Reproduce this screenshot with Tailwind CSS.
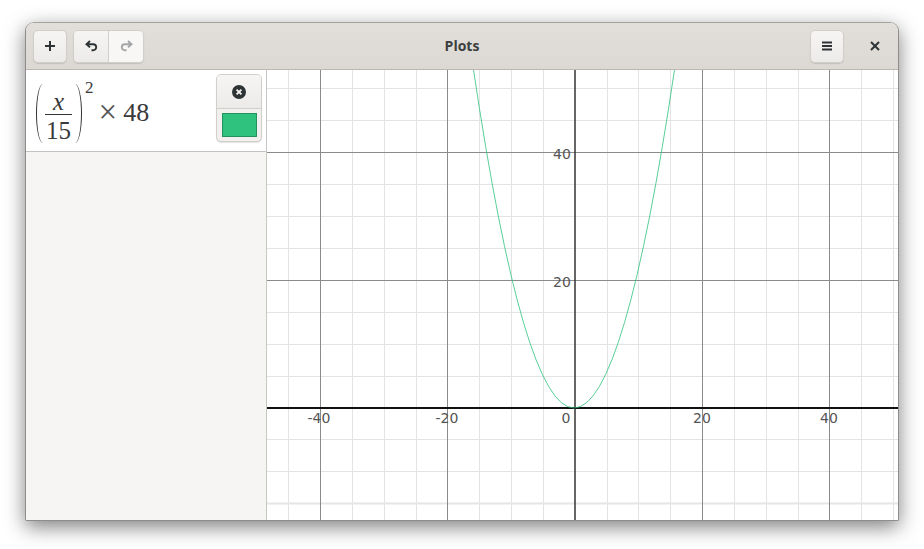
<!DOCTYPE html>
<html lang="en">
<head>
  <meta charset="UTF-8" />
  <title>Plots</title>
  <script src="https://cdn.jsdelivr.net/npm/@tailwindcss/browser@4"></script>
</head>
<body class="w-[924px] h-[549px] bg-white overflow-hidden font-['Open_Sans',sans-serif]">
  <div class="pt-[22px] pl-[25px]">
    <div class="w-[874px] h-[499px] flex flex-col rounded-t-[9px] rounded-b-[2px] border border-[#8f8d8a] border-t-[#a5a39f] shadow-[0_6px_20px_rgba(0,0,0,0.5)] overflow-hidden bg-white">
      <!-- header bar -->
      <header class="h-[47px] shrink-0 flex items-center pl-[7px] pr-[6px] bg-gradient-to-b from-[#e2dfdb] to-[#dcd9d4] border-b border-[#bfb8b1]">
        <button class="shrink-0 w-[34px] h-[33px] flex items-center justify-center rounded-[5px] border border-[#d2cfca] bg-gradient-to-b from-[#f6f5f4] to-[#edebe9] shadow-[0_1px_1px_rgba(0,0,0,0.12)]">
          <svg width="12" height="12" viewBox="0 0 12 12"><path d="M5 1h2v4h4v2H7v4H5V7H1V5h4z" fill="#2e3436"/></svg>
        </button>
        <div class="shrink-0 ml-[6px] flex w-[71px] h-[33px] rounded-[5px] border border-[#d2cfca] shadow-[0_1px_1px_rgba(0,0,0,0.12)] overflow-hidden">
          <button class="w-[35px] flex items-center justify-center border-r border-[#d2cfca] bg-gradient-to-b from-[#f6f5f4] to-[#edebe9]">
            <svg width="13" height="12" viewBox="0 0 13 12"><path d="M5 1 1.5 4.2 5 7.4M2 4.2h6.2a3 3 0 0 1 0 6H6.5" fill="none" stroke="#2e3436" stroke-width="1.9"/></svg>
          </button>
          <button class="flex-1 flex items-center justify-center bg-[#f8f7f6]">
            <svg width="13" height="12" viewBox="0 0 13 12"><path d="M8 1l3.5 3.2L8 7.4M11 4.2H4.8a3 3 0 0 0 0 6h1.7" fill="none" stroke="#a3a5a6" stroke-width="1.9"/></svg>
          </button>
        </div>
        <div class="flex-1 text-center text-[14px] font-bold text-[#3d3f40] pr-[30px] pb-[2px]">Plots</div>
        <button class="shrink-0 w-[34px] h-[33px] flex items-center justify-center rounded-[5px] border border-[#d2cfca] bg-gradient-to-b from-[#f6f5f4] to-[#edebe9] shadow-[0_1px_1px_rgba(0,0,0,0.12)]">
          <svg width="12" height="12" viewBox="0 0 12 12"><path d="M1 1.5h10v2H1zM1 5h10v2H1zM1 8.5h10v2H1z" fill="#2e3436"/></svg>
        </button>
        <button class="shrink-0 ml-[14px] w-[34px] h-[33px] flex items-center justify-center">
          <svg width="10" height="10" viewBox="0 0 10 10"><path d="M1 1l8 8M9 1 1 9" stroke="#2e3436" stroke-width="2"/></svg>
        </button>
      </header>

      <div class="flex-1 flex min-h-0">
        <!-- formula list -->
        <aside class="w-[241px] shrink-0 bg-[#f6f5f4] border-r border-[#c8c6c3]">
          <div class="h-[82px] bg-white border-b border-[#c4c2bf] flex justify-between pl-[10px] pr-[4px] pt-[4px]">
            <div class="flex items-center h-[78px] font-['Liberation_Serif',serif] text-[#3a3a3a]">
              <span class="w-[7px] h-[59px] border-l-[1.5px] border-[#333] rounded-l-[7px_30px]"></span>
              <span class="ml-[2px] mt-[3px] flex flex-col items-center w-[27px]">
                <span class="italic text-[25px] border-b border-[#333] w-full text-center leading-[31px] h-[29px]">x</span>
                <span class="text-[25px] leading-[31px] h-[29px]">15</span>
              </span>
              <span class="ml-[3px] w-[7px] h-[59px] border-r-[1.5px] border-[#333] rounded-r-[7px_30px]"></span>
              <span class="text-[17px] leading-none self-start mt-[5px] ml-[3px]">2</span>
              <span class="text-[33px] leading-none ml-[5px] mb-[1px] text-[#555]">×</span>
              <span class="text-[26px] leading-none ml-[6px] mb-[1px]">48</span>
            </div>
            <div class="w-[46px] h-[68px] flex flex-col rounded-[5px] border border-[#d2cfca] bg-[#f1f0ee] shadow-[0_1px_1px_rgba(0,0,0,0.12)] overflow-hidden">
              <button class="h-[33px] shrink-0 flex items-center justify-center bg-gradient-to-b from-[#f6f5f4] to-[#edebe9]">
                <svg width="14" height="14" viewBox="0 0 14 14"><circle cx="7" cy="7" r="7" fill="#2e3436"/><path d="M4.6 4.6l4.8 4.8M9.4 4.6 4.6 9.4" stroke="#f4f3f2" stroke-width="1.9"/></svg>
              </button>
              <div class="flex-1 border-t border-[#d2cfca] flex items-center justify-center">
                <div class="w-[35px] h-[24px] bg-[#2ec27e] border border-[#21915e]"></div>
              </div>
            </div>
          </div>
        </aside>

        <!-- graph -->
        <svg class="flex-1 block bg-white" viewBox="267 70 631 450" width="631" height="450" font-family="DejaVu Sans, sans-serif" font-size="14" fill="#555">
          <path stroke="#e3e3e3" d="M288.5 70v450M352.5 70v450M384.5 70v450M416.5 70v450M479.5 70v450M511.5 70v450M543.5 70v450M607.5 70v450M638.5 70v450M670.5 70v450M734.5 70v450M766.5 70v450M798.5 70v450M861.5 70v450M893.5 70v450M267 88.5h631M267 120.5h631M267 184.5h631M267 216.5h631M267 248.5h631M267 312.5h631M267 344.5h631M267 376.5h631M267 439.5h631M267 471.5h631"/>
          <path d="M267 503.5h631" stroke="#e6e6e6" stroke-width="2"/>
          <path d="M320.5 70v450M447.5 70v450M702.5 70v450M829.5 70v450M267 152.5h631M267 280.5h631" stroke="#8a8a8a"/>
          <path d="M575 70v450" stroke="#333" stroke-width="1.5"/>
          <path d="M267 408h631" stroke="#111" stroke-width="2"/>
          <path d="M473 66.4Q574 749.6 675 66.4" fill="none" stroke="#2ec27e" stroke-width="0.8"/>
          <g text-anchor="middle">
            <text x="319" y="423">-40</text>
            <text x="447" y="423">-20</text>
            <text x="566" y="423">0</text>
            <text x="702" y="423">20</text>
            <text x="829" y="423">40</text>
            <text x="562" y="159">40</text>
            <text x="562" y="287">20</text>
          </g>
        </svg>
      </div>
    </div>
  </div>
</body>
</html>
